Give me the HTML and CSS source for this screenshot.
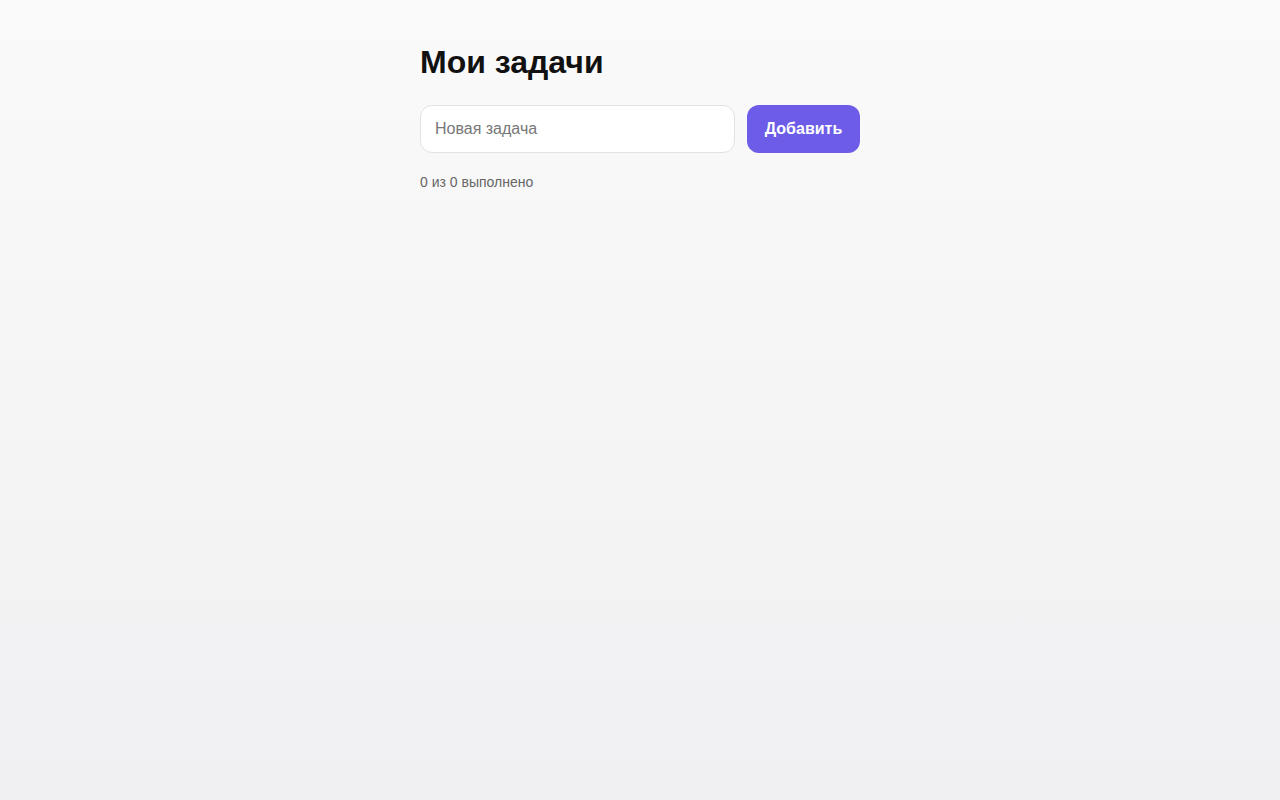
FILE: index.html
```html
<!DOCTYPE html>
<html lang="ru">
<head>
<meta charset="utf-8">
<title>Мои задачи</title>
<link rel="stylesheet" href="styles.css">
</head>
<body>
<main class="app">
  <h1 class="title">Мои задачи</h1>
  <form class="add-form">
    <input class="task-input" type="text" placeholder="Новая задача">
    <button class="add-btn" type="button">Добавить</button>
  </form>
  <p class="status">0 из 0 выполнено</p>
</main>
</body>
</html>
```
FILE: styles.css
```css
html, body {
  margin: 0;
  padding: 0;
  min-height: 100%;
}
body {
  min-height: 100vh;
  background: linear-gradient(180deg, #fafafa 0%, #f0f0f2 100%);
  font-family: "Liberation Sans", Arial, sans-serif;
  color: #111;
}
.app {
  width: 440px;
  margin: 0 auto;
  padding-top: 44px;
}
.title {
  margin: 0;
  font-size: 32px;
  font-weight: 700;
  color: #111;
}
.add-form {
  display: flex;
  gap: 12px;
  margin-top: 24px;
}
.task-input {
  flex: 1;
  height: 48px;
  box-sizing: border-box;
  padding: 0 14px;
  border: 1px solid #e2e2e5;
  border-radius: 12px;
  background: #fff;
  font-family: inherit;
  font-size: 16px;
  color: #111;
  outline: none;
}
.task-input::placeholder {
  color: #777;
}
.add-btn {
  width: 113px;
  height: 48px;
  border: none;
  border-radius: 12px;
  background: #6c5ce7;
  color: #fff;
  font-family: inherit;
  font-size: 16px;
  font-weight: 700;
  cursor: pointer;
}
.status {
  margin: 21px 0 0;
  font-size: 14px;
  color: #666;
}
```
